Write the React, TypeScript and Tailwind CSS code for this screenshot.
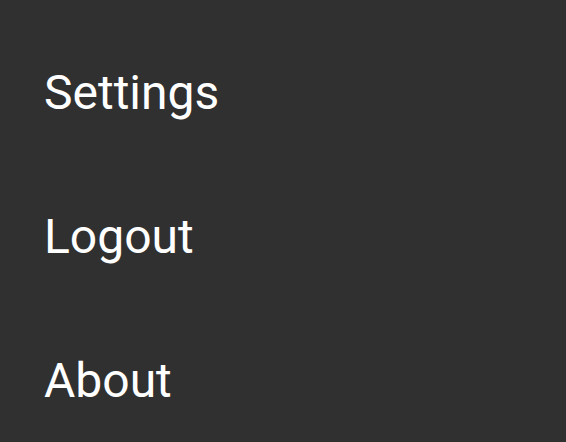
const MENU_ITEMS = ["Settings", "Logout", "About"];

export default function App() {
  return (
    <div
      className="h-[442px] w-[566px] overflow-hidden bg-[#303030] pt-[21px]"
      style={{ fontFamily: "Roboto, 'Noto Sans', sans-serif" }}
    >
      <ul className="flex flex-col">
        {MENU_ITEMS.map((item) => (
          <li
            key={item}
            className="flex h-[144px] items-center pl-[44px] text-[48px] leading-none text-white"
          >
            {item}
          </li>
        ))}
      </ul>
    </div>
  );
}
